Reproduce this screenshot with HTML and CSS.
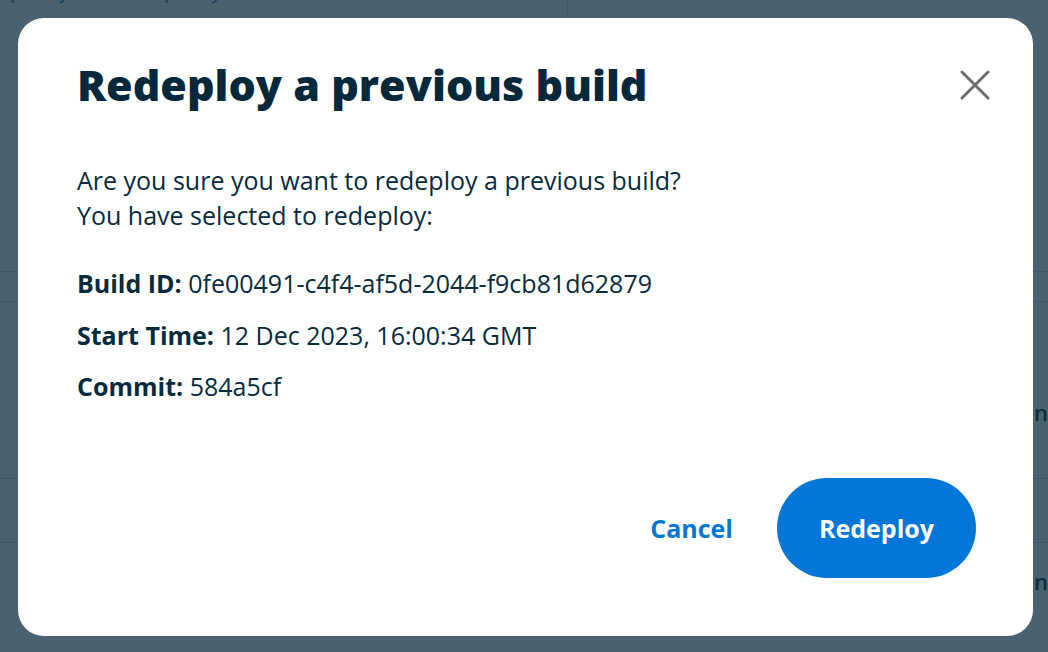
FILE: index.html
```html
<!DOCTYPE html>
<html lang="en">
<head>
<meta charset="utf-8">
<title>Redeploy a previous build</title>
<link rel="stylesheet" href="styles.css">
</head>
<body>
<div class="page">
  <div class="page-top">
    <span class="crumb">project deployments builds</span>
    <span class="divider"></span>
  </div>
  <div class="table">
    <div class="row r1"><span></span><span class="cell-right"></span></div>
    <div class="row r2"><span></span><span class="cell-right">nt</span></div>
    <div class="row r3"><span></span><span class="cell-right"></span></div>
    <div class="row r4"><span></span><span class="cell-right">ni</span></div>
  </div>
</div>

<div class="overlay">
  <div class="modal" role="dialog" aria-labelledby="modal-title">
    <div class="modal-header">
      <h1 id="modal-title" class="modal-title">Redeploy a previous build</h1>
      <button class="close-btn" aria-label="Close">
        <svg width="30" height="30" viewBox="0 0 30 30" aria-hidden="true">
          <path d="M2 2 L28 28 M28 2 L2 28" stroke="#6b6e71" stroke-width="3" stroke-linecap="round" fill="none"/>
        </svg>
      </button>
    </div>
    <div class="modal-body">
      <p class="intro">Are you sure you want to redeploy a previous build?<br>You have selected to redeploy:</p>
      <dl class="details">
        <div class="detail"><dt>Build ID:</dt> <dd>0fe00491-c4f4-af5d-2044-f9cb81d62879</dd></div>
        <div class="detail"><dt>Start Time:</dt> <dd>12 Dec 2023, 16:00:34 GMT</dd></div>
        <div class="detail"><dt>Commit:</dt> <dd>584a5cf</dd></div>
      </dl>
    </div>
    <div class="modal-footer">
      <button class="btn-link">Cancel</button>
      <button class="btn-primary">Redeploy</button>
    </div>
  </div>
</div>
</body>
</html>
```

FILE: styles.css
```css
* { box-sizing: border-box; }

html, body {
  margin: 0;
  padding: 0;
  height: 100%;
}

body {
  font-family: "Open Sans", "Noto Sans", sans-serif;
  background: #ffffff;
  color: #072b3c;
  overflow: hidden;
}

/* Background page (dimmed under overlay) */
.page {
  height: 100%;
  display: flex;
  flex-direction: column;
}

.page-top {
  height: 52px;
  display: flex;
  align-items: flex-start;
}

.crumb {
  color: #1b5fa8;
  font-size: 20px;
  line-height: 20px;
  margin-top: -19px;
  margin-left: 10px;
  letter-spacing: 6px;
}

.divider {
  width: 1px;
  height: 18px;
  background: #d0d6db;
  margin-left: auto;
  margin-right: 480px;
}

.table {
  display: flex;
  flex-direction: column;
  margin-top: 219px;
}

.row {
  display: flex;
  justify-content: space-between;
  align-items: center;
  border-top: 1px solid #cfd6dc;
  font-weight: 600;
  font-size: 22px;
  color: #0d2b3e;
}

.r1 { height: 30px; }
.r2 { height: 177px; padding-top: 44px; }
.r3 { height: 64px; }
.r4 { height: 76px; }

.cell-right {
  width: 14px;
  overflow: hidden;
  white-space: nowrap;
}

/* Overlay */
.overlay {
  position: fixed;
  inset: 0;
  background: rgba(14, 46, 64, 0.75);
  display: flex;
  align-items: flex-start;
  justify-content: flex-start;
  padding: 18px 15px 16px 18px;
}

.modal {
  width: 1015px;
  height: 618px;
  background: #ffffff;
  border-radius: 26px;
  padding: 37px 43px 58px 59px;
  display: flex;
  flex-direction: column;
}

.modal-header {
  display: flex;
  justify-content: space-between;
  align-items: flex-start;
}

.modal-title {
  margin: 0;
  font-size: 43px;
  line-height: 60px;
  font-weight: 800;
  color: #05283a;
}

.close-btn {
  background: none;
  border: 0;
  padding: 0;
  margin: 15px 0 0 0;
  width: 30px;
  height: 30px;
  cursor: pointer;
  display: flex;
}

.modal-body {
  margin-top: 48px;
  flex: 1;
}

.intro {
  margin: 0;
  font-size: 25px;
  line-height: 35px;
}

.details {
  margin: 33px 0 0 0;
  display: flex;
  flex-direction: column;
  gap: 16.5px;
}

.detail {
  font-size: 25px;
  line-height: 35px;
}

.detail dt, .detail dd {
  display: inline;
  margin: 0;
}

.detail dt {
  font-weight: 700;
}

.modal-footer {
  display: flex;
  justify-content: flex-end;
  align-items: center;
  gap: 44px;
  padding-right: 14px;
}

.btn-link {
  background: none;
  border: 0;
  padding: 0;
  font-family: inherit;
  font-size: 25px;
  font-weight: 700;
  color: #0277d6;
  cursor: pointer;
}

.btn-primary {
  width: 199px;
  height: 100px;
  border: 0;
  border-radius: 50px;
  background: #0277d9;
  color: #ffffff;
  font-family: inherit;
  font-size: 25px;
  font-weight: 700;
  cursor: pointer;
}
```
